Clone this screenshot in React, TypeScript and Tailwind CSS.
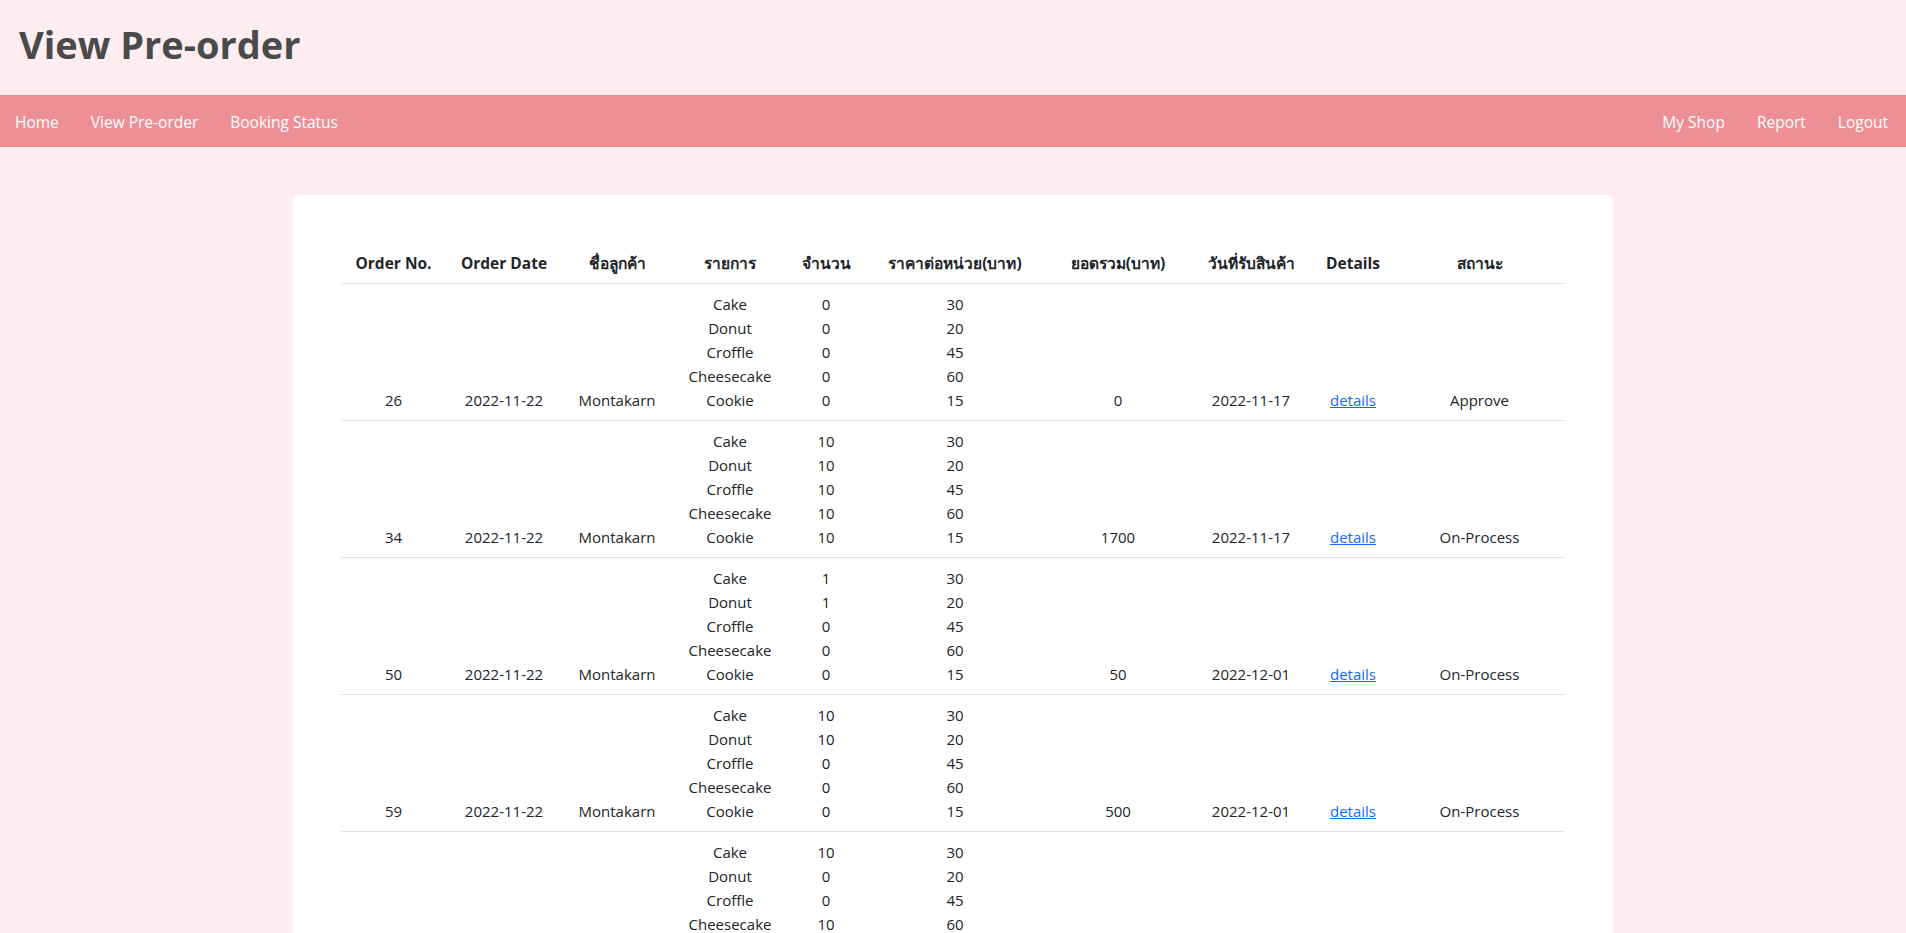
import React from "react";

type Order = {
  no: number;
  date: string;
  name: string;
  qty: number[];
  total: string;
  pickup: string;
  status: string;
};

const items = ["Cake", "Donut", "Croffle", "Cheesecake", "Cookie"];
const prices = [30, 20, 45, 60, 15];

const orders: Order[] = [
  { no: 26, date: "2022-11-22", name: "Montakarn", qty: [0, 0, 0, 0, 0], total: "0", pickup: "2022-11-17", status: "Approve" },
  { no: 34, date: "2022-11-22", name: "Montakarn", qty: [10, 10, 10, 10, 10], total: "1700", pickup: "2022-11-17", status: "On-Process" },
  { no: 50, date: "2022-11-22", name: "Montakarn", qty: [1, 1, 0, 0, 0], total: "50", pickup: "2022-12-01", status: "On-Process" },
  { no: 59, date: "2022-11-22", name: "Montakarn", qty: [10, 10, 0, 0, 0], total: "500", pickup: "2022-12-01", status: "On-Process" },
  { no: 60, date: "2022-11-22", name: "Montakarn", qty: [10, 0, 0, 10, 0], total: "900", pickup: "2022-12-01", status: "On-Process" },
];

const font = { fontFamily: '"Open Sans", "Noto Sans", "DejaVu Sans", sans-serif' };

function Lines({ values }: { values: (string | number)[] }) {
  return (
    <>
      {values.map((v, i) => (
        <div key={i}>{v}</div>
      ))}
    </>
  );
}

export default function App() {
  const headers = [
    "Order No.",
    "Order Date",
    "ชื่อลูกค้า",
    "รายการ",
    "จำนวน",
    "ราคาต่อหน่วย(บาท)",
    "ยอดรวม(บาท)",
    "วันที่รับสินค้า",
    "Details",
    "สถานะ",
  ];
  const widths = ["w-[105px]", "w-[116px]", "w-[110px]", "w-[116px]", "w-[76px]", "w-[182px]", "w-[144px]", "w-[122px]", "w-[82px]", "w-[171px]"];
  return (
    <div className="min-h-screen bg-[#ffeef1] text-[15px] leading-6 text-[#212529]" style={font}>
      <header className="h-[95px] flex items-center px-[19px]">
        <h1 className="text-[38px] font-bold text-[#4a4a4a] leading-none pb-[8px]">View Pre-order</h1>
      </header>
      <nav className="h-[52px] bg-[#ed9096] flex items-center justify-between text-white text-[15.5px]">
        <div className="flex pt-[1px]">
          <a className="pl-[15px] pr-[16px]">Home</a>
          <a className="px-[16px]">View Pre-order</a>
          <a className="px-[16px]">Booking Status</a>
        </div>
        <div className="flex pr-[2px] pt-[1px]">
          <a className="px-[16px]">My Shop</a>
          <a className="px-[16px]">Report</a>
          <a className="px-[16px]">Logout</a>
        </div>
      </nav>
      <main className="pt-[48px] pb-[48px]">
        <div className="mx-auto w-[1320px] bg-white rounded-[6px] p-[48px]">
          <table className="w-full table-fixed border-collapse text-center">
            <thead>
              <tr className="border-b border-[#dee2e6]">
                {headers.map((h, i) => (
                  <th key={h} className={`${widths[i]} p-2 font-bold text-[15.5px]`}>
                    {h}
                  </th>
                ))}
              </tr>
            </thead>
            <tbody>
              {orders.map((o) => (
                <tr key={o.no} className="border-b border-[#dee2e6] align-bottom">
                  <td className="p-2">{o.no}</td>
                  <td className="p-2">{o.date}</td>
                  <td className="p-2">{o.name}</td>
                  <td className="p-2">
                    <Lines values={items} />
                  </td>
                  <td className="p-2">
                    <Lines values={o.qty} />
                  </td>
                  <td className="p-2">
                    <Lines values={prices} />
                  </td>
                  <td className="p-2">{o.total}</td>
                  <td className="p-2">{o.pickup}</td>
                  <td className="p-2">
                    <a className="text-[#0d6efd] underline">details</a>
                  </td>
                  <td className="p-2">{o.status}</td>
                </tr>
              ))}
            </tbody>
          </table>
        </div>
      </main>
    </div>
  );
}
